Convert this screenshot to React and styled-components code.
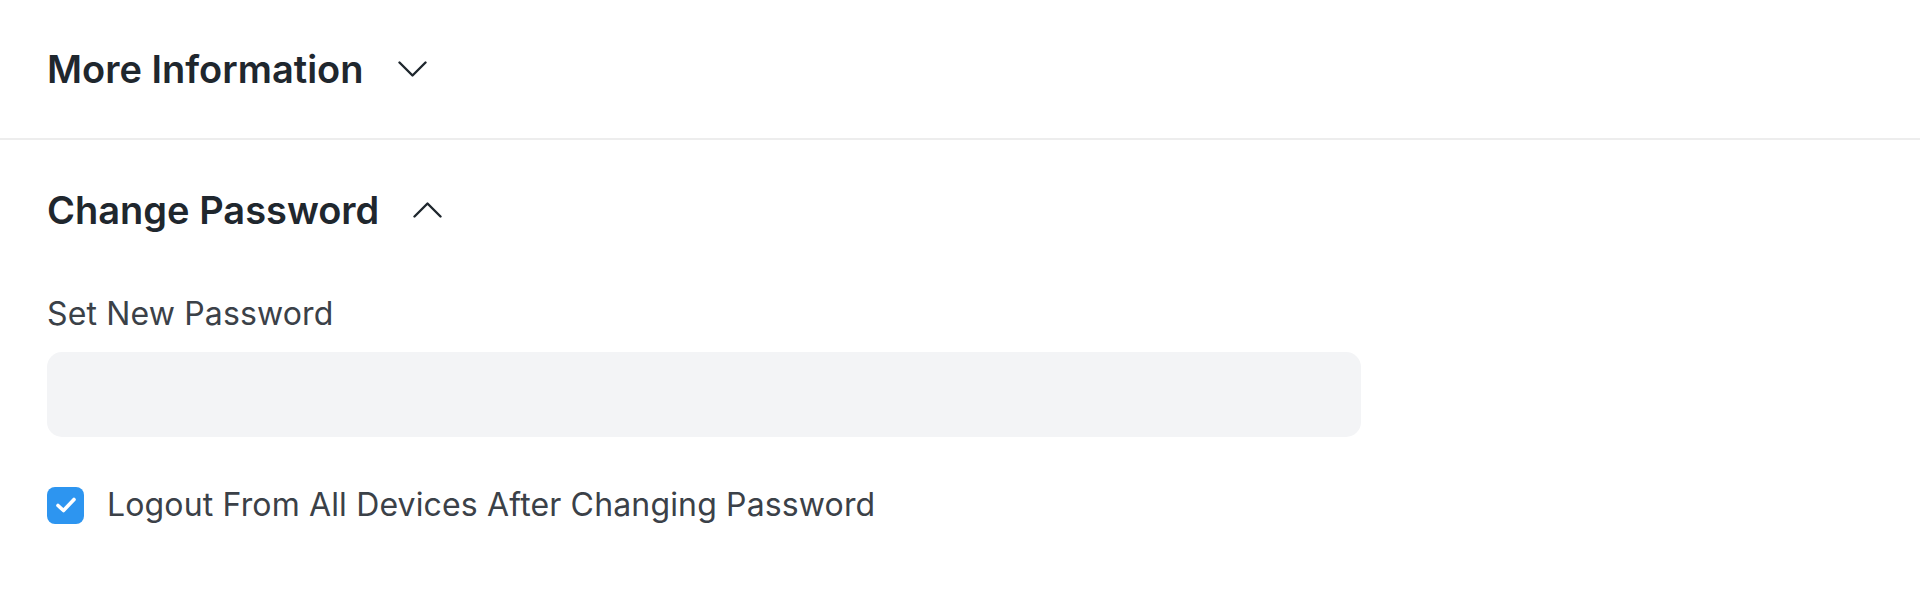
import React from 'react'
import styled, { createGlobalStyle } from 'styled-components'

const GlobalStyle = createGlobalStyle`
  body {
    margin: 0;
    background: #ffffff;
    font-family: Inter, "Noto Sans", sans-serif;
  }
`

const Page = styled.div`
  width: 1920px;
  height: 593px;
  background: #fff;
  overflow: hidden;
`

const Section = styled.section`
  padding: ${p => p.$pad};
  border-bottom: ${p => (p.$divider ? '2px solid #ededed' : 'none')};
`

const SectionHead = styled.div`
  display: flex;
  align-items: center;
  gap: 34px;
  height: 44px;
`

const Title = styled.h3`
  margin: 0;
  font-size: 38px;
  font-weight: 600;
  line-height: 44px;
  color: #1f272e;
`

const Chevron = styled.svg`
  width: 29px;
  height: 16px;
  flex-shrink: 0;
`

const Body = styled.div`
  display: flex;
  flex-direction: column;
  width: 1314px;
`

const Label = styled.label`
  font-size: 32px;
  line-height: 40px;
  color: #3b4148;
  letter-spacing: 0.15px;
  margin-top: 62px;
`

const Input = styled.input`
  margin-top: 18px;
  height: 85px;
  border: none;
  border-radius: 15px;
  background: #f3f4f6;
  outline: none;
  padding: 0 24px;
  font-size: 32px;
`

const CheckRow = styled.label`
  display: flex;
  align-items: center;
  gap: 23px;
  margin-top: 48px;
  font-size: 32px;
  line-height: 40px;
  color: #3b4148;
  letter-spacing: 0.15px;
`

const Box = styled.span`
  width: 37px;
  height: 37px;
  border-radius: 8px;
  background: #2d95f0;
  display: flex;
  align-items: center;
  justify-content: center;
  flex-shrink: 0;
`

function ChevronIcon({ up }) {
  return (
    <Chevron viewBox="0 0 29 16" fill="none">
      <polyline
        points={up ? '1.5,14.5 14.5,1.5 27.5,14.5' : '1.5,1.5 14.5,14.5 27.5,1.5'}
        stroke="#1f272e"
        strokeWidth="2.4"
        strokeLinecap="round"
        strokeLinejoin="round"
      />
    </Chevron>
  )
}

export default function App() {
  return (
    <Page>
      <GlobalStyle />
      <Section $divider $pad="47px 0 47px 47px">
        <SectionHead>
          <Title>More Information</Title>
          <ChevronIcon />
        </SectionHead>
      </Section>
      <Section $pad="48px 0 0 47px">
        <SectionHead>
          <Title>Change Password</Title>
          <ChevronIcon up />
        </SectionHead>
        <Body>
          <Label>Set New Password</Label>
          <Input type="password" />
          <CheckRow>
            <Box>
              <svg width="24" height="20" viewBox="0 0 24 20" fill="none">
                <polyline points="4,10.5 9.5,15.5 20,4.5" stroke="#fff" strokeWidth="3.6" strokeLinecap="round" strokeLinejoin="round" />
              </svg>
            </Box>
            Logout From All Devices After Changing Password
          </CheckRow>
        </Body>
      </Section>
    </Page>
  )
}
